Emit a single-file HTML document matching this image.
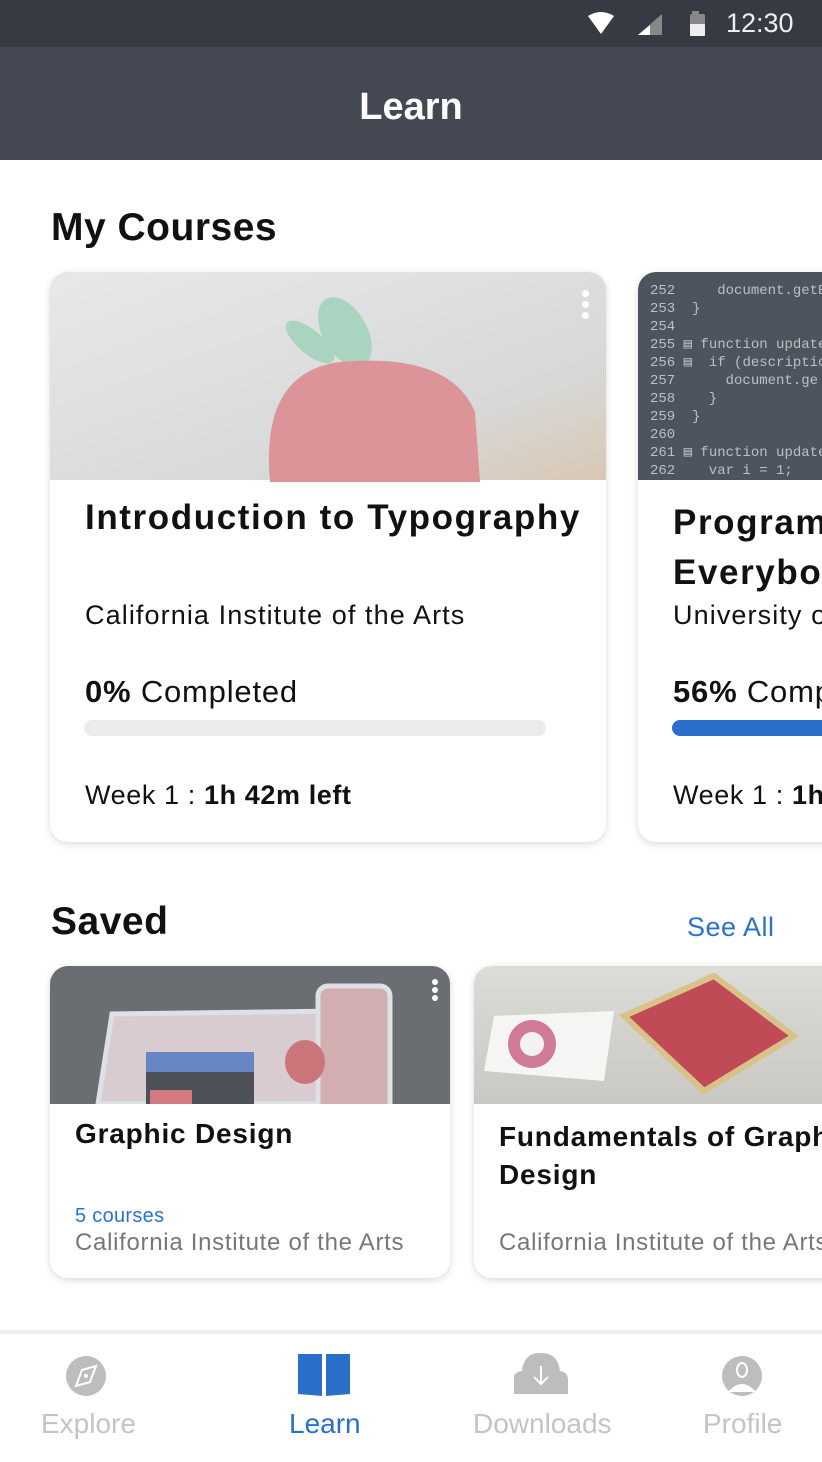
<!DOCTYPE html>
<html><head><meta charset="utf-8"><style>
*{margin:0;padding:0;box-sizing:border-box}
html,body{width:822px;height:1462px;overflow:hidden}
body{background:#fff;font-family:"Liberation Sans",sans-serif;position:relative;color:#111}
#wrap{position:absolute;left:0;top:0;width:822px;height:1462px;overflow:hidden}
.abs{position:absolute}
.card{position:absolute;background:#fff;border-radius:18px;overflow:hidden;box-shadow:0 2px 8px rgba(0,0,0,.15)}
.t{position:absolute;white-space:nowrap}
</style></head><body><div id="wrap">
<div class="abs" style="left:0;top:0;width:822px;height:47px;background:#363a43"></div>
<svg class="abs" style="left:586px;top:10px" width="120" height="28">
<path d="M2 6 Q15 -2 28 6 L15 24Z" fill="#fff"/>
<path d="M52 25 L76 4 L76 25Z" fill="#888"/><path d="M52 25 L64 15 L64 25Z" fill="#fff"/>
<rect x="104" y="4" width="15" height="22" rx="2" fill="#888"/><rect x="106" y="1" width="7" height="4" fill="#888"/><rect x="104" y="14" width="15" height="12" rx="1" fill="#eee"/>
</svg>
<div class="t" style="left:726px;top:8px;font-size:27px;color:#eee">12:30</div>
<div class="abs" style="left:0;top:47px;width:822px;height:113px;background:#434852"></div>
<div class="t" style="left:0;width:822px;text-align:center;top:86px;font-size:38px;font-weight:bold;color:#fff">Learn</div>

<div class="t" style="left:51px;top:206px;font-size:39px;font-weight:bold;letter-spacing:0.5px">My Courses</div>

<div class="card" style="left:50px;top:272px;width:556px;height:570px">
<div class="abs" style="left:0;top:0;width:556px;height:208px;background:linear-gradient(160deg,#e6e8e9,#d7d9d9 70%,#d8c8b4)"></div>
<svg class="abs" style="left:200px;top:10px" width="240" height="200"><ellipse cx="95" cy="50" rx="22" ry="38" fill="#a9d4c0" transform="rotate(-30 95 50)"/><ellipse cx="60" cy="60" rx="12" ry="30" fill="#a9d4c0" transform="rotate(-50 60 60)"/><path d="M20 200 Q10 90 90 80 Q200 70 225 130 L230 200Z" fill="#dc9498"/></svg>
<div class="abs" style="left:532px;top:18px;width:7px;height:7px;border-radius:50%;background:#fff;box-shadow:0 11px 0 #fff,0 22px 0 #fff"></div>
<div class="t" style="left:35px;top:226px;font-size:35px;font-weight:bold;letter-spacing:1.6px">Introduction to Typography</div>
<div class="t" style="left:35px;top:328px;font-size:27px;letter-spacing:1.1px">California Institute of the Arts</div>
<div class="t" style="left:35px;top:402px;font-size:31px;letter-spacing:0.8px"><b>0%</b> Completed</div>
<div class="abs" style="left:34px;top:448px;width:462px;height:16px;border-radius:8px;background:#ebebeb"></div>
<div class="t" style="left:35px;top:508px;font-size:27px;letter-spacing:0.6px">Week 1 : <b>1h 42m left</b></div>
</div>

<div class="card" style="left:638px;top:272px;width:300px;height:570px">
<div class="abs" style="left:0;top:0;width:300px;height:208px;background:#4c555d"></div>
<div class="t" style="left:12px;top:10px;font-size:14px;line-height:18px;color:#b8c0c6;font-family:'Liberation Mono',monospace">252&nbsp;&nbsp;&nbsp;&nbsp;&nbsp;document.getElem<br>253&nbsp;&nbsp;}<br>254<br>255 ▤ function updatePho<br>256 ▤&nbsp;&nbsp;if (descriptions.l<br>257&nbsp;&nbsp;&nbsp;&nbsp;&nbsp;&nbsp;document.ge<br>258&nbsp;&nbsp;&nbsp;&nbsp;}<br>259&nbsp;&nbsp;}<br>260<br>261 ▤ function updateA<br>262&nbsp;&nbsp;&nbsp;&nbsp;var i = 1;</div>
<div class="t" style="left:35px;top:226px;font-size:35px;font-weight:bold;line-height:50px;letter-spacing:1.6px">Programming for<br>Everybody</div>
<div class="t" style="left:35px;top:328px;font-size:27px;letter-spacing:1.1px">University of Michigan</div>
<div class="t" style="left:35px;top:402px;font-size:31px;letter-spacing:0.8px"><b>56%</b> Completed</div>
<div class="abs" style="left:34px;top:448px;width:300px;height:16px;border-radius:8px;background:#2a6fca"></div>
<div class="t" style="left:35px;top:508px;font-size:27px;letter-spacing:0.6px">Week 1 : <b>1h 42m left</b></div>
</div>

<div class="t" style="left:51px;top:900px;font-size:39px;font-weight:bold;letter-spacing:0.5px">Saved</div>
<div class="t" style="left:687px;top:912px;font-size:27px;color:#2a73cc;letter-spacing:0.5px">See All</div>

<div class="card" style="left:50px;top:966px;width:400px;height:312px">
<div class="abs" style="left:0;top:0;width:400px;height:138px;background:#6a6d71"></div>
<svg class="abs" style="left:0;top:0" width="400" height="138"><path d="M48 138 L62 48 L290 45 L290 138Z" fill="#d9ccd0" stroke="#dde0e4" stroke-width="5"/><rect x="268" y="20" width="72" height="130" rx="10" fill="#d3aeb1" stroke="#dde0e4" stroke-width="5"/><rect x="96" y="86" width="108" height="20" fill="#6685c4"/><rect x="96" y="106" width="108" height="40" fill="#4e5057"/><rect x="100" y="124" width="42" height="14" fill="#d27a80"/><ellipse cx="255" cy="96" rx="20" ry="22" fill="#c9757a"/></svg>
<div class="abs" style="left:382px;top:13px;width:6px;height:6px;border-radius:50%;background:#fff;box-shadow:0 8px 0 #fff,0 16px 0 #fff"></div>
<div class="t" style="left:25px;top:152px;font-size:28px;font-weight:bold;letter-spacing:0.8px">Graphic Design</div>
<div class="t" style="left:25px;top:239px;font-size:20px;color:#2a73cc;letter-spacing:0.3px">5 courses</div>
<div class="t" style="left:25px;top:263px;font-size:24px;color:#777;letter-spacing:0.7px">California Institute of the Arts</div>
</div>

<div class="card" style="left:474px;top:966px;width:400px;height:312px">
<div class="abs" style="left:0;top:0;width:400px;height:138px;background:linear-gradient(180deg,#dcdcd8,#c9c8c2)"></div>
<svg class="abs" style="left:0;top:0" width="400" height="138"><path d="M10 105 L20 50 L140 45 L130 115Z" fill="#f5f5f3"/><circle cx="58" cy="78" r="24" fill="#d07a9a"/><circle cx="58" cy="78" r="12" fill="#f2f2f0"/><path d="M150 50 L240 10 L320 70 L230 125Z" fill="#c04a55" stroke="#d9c28a" stroke-width="6"/></svg>
<div class="t" style="left:25px;top:152px;font-size:28px;font-weight:bold;line-height:38px;letter-spacing:0.8px">Fundamentals of Graphic<br>Design</div>
<div class="t" style="left:25px;top:263px;font-size:24px;color:#777;letter-spacing:0.7px">California Institute of the Arts</div>
</div>

<div class="abs" style="left:0;top:1330px;width:822px;height:4px;background:#eee"></div>
<svg class="abs" style="left:0;top:1334px" width="822" height="80">
<circle cx="86" cy="42" r="20" fill="#bdbdbd"/><path d="M96 32 L90 48 L76 52 L82 36Z" fill="none" stroke="#fff" stroke-width="2"/><circle cx="86" cy="42" r="2" fill="#fff"/>
<path d="M298 20 L322 20 L322 62 L298 60Z M326 20 L350 20 L350 60 L326 62Z" fill="#2a6fca"/>
<path d="M514 60 L514 44 Q514 38 522 37 Q524 18 541 19 Q558 19 560 37 Q568 38 568 46 L568 60Z" fill="#bdbdbd"/><path d="M541 32 L541 50 M534 43 L541 50 L548 43" fill="none" stroke="#fff" stroke-width="2"/>
<circle cx="742" cy="42" r="20" fill="#bdbdbd"/><ellipse cx="742" cy="36" rx="5" ry="7" fill="none" stroke="#fff" stroke-width="2"/><path d="M728 58 Q742 42 756 58" fill="#fff"/>
</svg>
<div class="t" style="left:41px;top:1408px;font-size:28px;color:#c4c4c4">Explore</div>
<div class="t" style="left:289px;top:1408px;font-size:28px;color:#2a6fca">Learn</div>
<div class="t" style="left:473px;top:1408px;font-size:28px;color:#c4c4c4">Downloads</div>
<div class="t" style="left:703px;top:1408px;font-size:28px;color:#c4c4c4">Profile</div>
</div></body></html>
